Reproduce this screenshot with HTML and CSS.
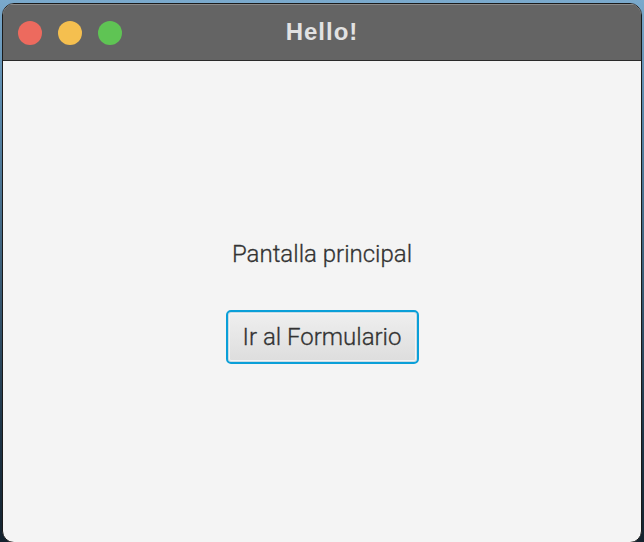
FILE: index.html
```html
<!DOCTYPE html>
<html lang="en">
<head>
  <meta charset="UTF-8" />
  <meta name="viewport" content="width=device-width, initial-scale=1.0"/>
  <title>Hello!</title>
  <link rel="stylesheet" href="styles.css">
</head>
<body>
  <div class="window">
    <div class="titlebar">
      <div class="lights">
        <span class="light red"></span>
        <span class="light yellow"></span>
        <span class="light green"></span>
      </div>
      <div class="title">Hello!</div>
    </div>
    <main class="content">
      <p class="label">Pantalla principal</p>
      <button class="btn">Ir al Formulario</button>
    </main>
  </div>
</body>
</html>
```

FILE: styles.css
```css
html, body {
  margin: 0;
  padding: 0;
  width: 100%;
  height: 100%;
}

body {
  background: linear-gradient(#7aa9cc 0%, #5a88aa 20%, #1e3446 80%, #14222e 100%);
  padding: 3px 2px 1px 2px;
  box-sizing: border-box;
  font-family: Roboto, "Liberation Sans", sans-serif;
}

.window {
  height: 100%;
  display: flex;
  flex-direction: column;
  border: 1px solid #1a1a1a;
  border-radius: 12px;
  overflow: hidden;
  background: #f4f4f4;
}

.titlebar {
  position: relative;
  height: 57px;
  display: flex;
  align-items: center;
  justify-content: center;
  background: #646464;
  border-top: 1px solid #8a8a8a;
  border-bottom: 1px solid #2a2a2a;
  box-sizing: border-box;
}

.lights {
  position: absolute;
  left: 15px;
  top: 16px;
  display: flex;
  gap: 16px;
}

.light {
  width: 24px;
  height: 24px;
  border-radius: 50%;
}

.red { background: #ed6a5e; }
.yellow { background: #f5bf4f; }
.green { background: #5fc454; }

.title {
  color: #e2e2e2;
  font-family: "Liberation Sans", Arial, sans-serif;
  font-weight: bold;
  font-size: 24px;
  letter-spacing: 1px;
  margin-top: -2px;
}

.content {
  flex: 1;
  display: flex;
  flex-direction: column;
  align-items: center;
  padding-top: 179px;
}

.label {
  margin: 0;
  font-size: 24px;
  font-weight: 300;
  color: #333;
  -webkit-text-stroke: 0.3px #333;
}

.btn {
  margin-top: 42px;
  width: 193px;
  height: 54px;
  font-family: Roboto, "Liberation Sans", sans-serif;
  font-size: 24px;
  font-weight: 300;
  -webkit-text-stroke: 0.3px #333;
  color: #333;
  border: 2px solid #0a9fd8;
  border-radius: 5px;
  background: linear-gradient(#efefef, #dddddd);
  box-shadow: inset 0 0 0 1px #c9dbe4, inset 0 0 0 2px #f4f4f4;
  padding: 0;
}
```
